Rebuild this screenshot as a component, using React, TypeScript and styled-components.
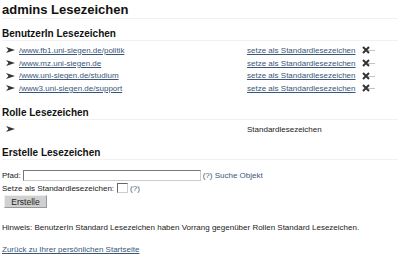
import React from "react";
import styled, { createGlobalStyle } from "styled-components";

const Global = createGlobalStyle`
  html, body { margin: 0; padding: 0; background: #fff; }
  body { font-family: "Liberation Sans", Arial, sans-serif; color: #222; }
`;

const Page = styled.div`
  padding: 0 2px;
  font-size: 8px;
`;

const Title = styled.div`
  margin: 0;
  padding-top: 2px;
  font-size: 13px;
  font-weight: bold;
  line-height: 16px;
  color: #111;
  border-bottom: 1px solid #f1f1f1;
`;

const SectionTitle = styled.div<{ $top: number }>`
  margin: ${(p) => p.$top}px 0 0 0;
  font-size: 10px;
  font-weight: bold;
  line-height: 13px;
  color: #111;
  border-bottom: 1px solid #f1f1f1;
`;

const Table = styled.div`
  display: grid;
  grid-template-columns: 13px 228px 115px 20px;
  grid-auto-rows: 12.7px;
  margin-top: 3px;
  margin-left: 4px;
`;

const Cell = styled.div`
  display: flex;
  align-items: center;
  white-space: nowrap;
`;

const Link = styled.a<{ $plain?: boolean }>`
  color: #3a5679;
  text-decoration: ${(p) => (p.$plain ? "none" : "underline")};
  cursor: pointer;
`;

const Plain = styled.span`
  color: #222;
`;

const Arrow = () => (
  <svg width="9" height="6" viewBox="0 0 9 6">
    <path d="M0 0 L9 3 L0 6 L2.5 3 Z" fill="#333" />
  </svg>
);

const Del = () => (
  <svg width="14" height="8" viewBox="0 0 14 8">
    <path d="M6 4.5 L13 4.5" stroke="#c4c4c4" strokeWidth="1" />
    <path d="M1 1 L7 7 M7 1 L1 7" stroke="#333" strokeWidth="2" />
  </svg>
);

const Form = styled.div`
  margin-top: 9px;
  display: flex;
  flex-direction: column;
`;

const FieldRow = styled.div<{ $top?: number }>`
  display: flex;
  align-items: center;
  gap: 2px;
  height: 12px;
  margin-top: ${(p) => p.$top ?? 0}px;
`;

const TextInput = styled.input`
  box-sizing: border-box;
  width: 178px;
  height: 11px;
  padding: 0;
  margin: 0;
  border: 1px solid #777;
  border-right-color: #ccc;
  border-bottom-color: #ccc;
  font-size: 8px;
`;

const Check = styled.span`
  box-sizing: border-box;
  display: inline-block;
  width: 11px;
  height: 10px;
  margin-left: 1px;
  border: 1px solid #666;
  border-right-color: #ccc;
  border-bottom-color: #ccc;
  background: #fff;
`;

const Button = styled.button`
  align-self: flex-start;
  margin: 1px 0 0 2px;
  width: 43px;
  height: 13px;
  padding: 0;
  font-family: "Liberation Sans", Arial, sans-serif;
  font-size: 8.5px;
  color: #222;
  background: #d0d0d0;
  border: 1px solid #999;
  border-top-color: #eee;
  border-left-color: #eee;
`;

const Note = styled.p`
  margin: 14px 0 0 0;
  line-height: 12px;
`;

const Back = styled.p`
  margin: 10px 0 0 0;
  line-height: 12px;
`;

const bookmarks = [
  "/www.fb1.uni-siegen.de/politik",
  "/www.mz.uni-siegen.de",
  "/www.uni-siegen.de/studium",
  "/www3.uni-siegen.de/support",
];

export default function App() {
  return (
    <Page>
      <Global />
      <Title role="heading" aria-level={1}>admins Lesezeichen</Title>
      <SectionTitle role="heading" aria-level={2} $top={8}>BenutzerIn Lesezeichen</SectionTitle>
      <Table>
        {bookmarks.map((b) => (
          <React.Fragment key={b}>
            <Cell><Arrow /></Cell>
            <Cell><Link>{b}</Link></Cell>
            <Cell><Link>setze als Standardlesezeichen</Link></Cell>
            <Cell><Del /></Cell>
          </React.Fragment>
        ))}
      </Table>
      <SectionTitle role="heading" aria-level={2} $top={11}>Rolle Lesezeichen</SectionTitle>
      <Table>
        <Cell><Arrow /></Cell>
        <Cell />
        <Cell><Plain>Standardlesezeichen</Plain></Cell>
        <Cell />
      </Table>
      <SectionTitle role="heading" aria-level={2} $top={11}>Erstelle Lesezeichen</SectionTitle>
      <Form>
        <FieldRow>
          <span>Pfad:</span>
          <TextInput type="text" />
          <Link $plain>(?) Suche Objekt</Link>
        </FieldRow>
        <FieldRow $top={1}>
          <span>Setze als Standardlesezeichen:</span>
          <Check />
          <Link $plain>(?)</Link>
        </FieldRow>
        <Button>Erstelle</Button>
      </Form>
      <Note>Hinweis: BenutzerIn Standard Lesezeichen haben Vorrang gegenüber Rollen Standard Lesezeichen.</Note>
      <Back><Link>Zurück zu Ihrer persönlichen Startseite</Link></Back>
    </Page>
  );
}
